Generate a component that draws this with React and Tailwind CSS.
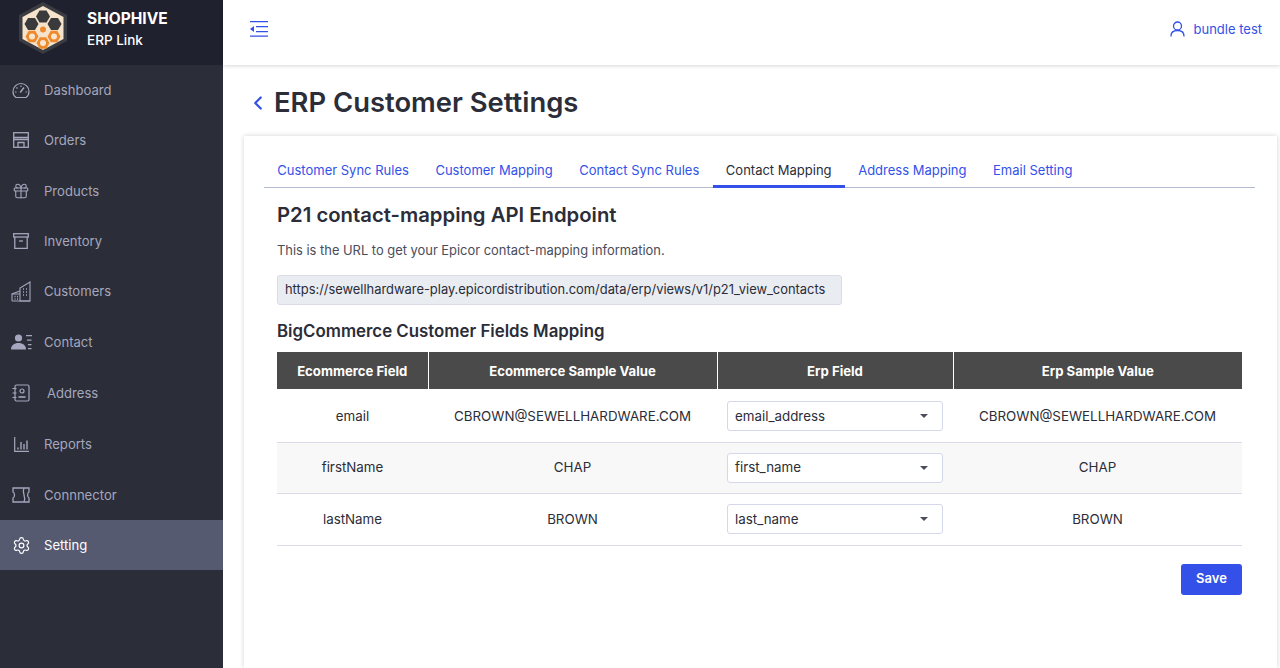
import { ChevronLeft, Gift, Settings } from "lucide-react";

function Logo() {
  const hex = (cx, cy, r) => {
    const pts = [];
    for (let i = 0; i < 6; i++) {
      const a = (Math.PI / 3) * i;
      pts.push(`${cx + r * Math.cos(a)},${cy + r * Math.sin(a)}`);
    }
    return pts.join(" ");
  };
  return (
    <svg width="50" height="52" viewBox="0 0 50 52" className="shrink-0">
      <polygon points="25,0 49,13 49,39 25,52 1,39 1,13" fill="#3b3c42" />
      <polygon points="25,4 45.500,15 45.500,37 25,48 4.500,37 4.500,15" fill="#f6e3cb" />
      <polygon points={hex(25, 14.500, 7)} fill="#3a3a3c" />
      <polygon points={hex(13.500, 22, 7)} fill="#3a3a3c" />
      <polygon points={hex(36.500, 22, 7)} fill="#3a3a3c" />
      <circle cx="25" cy="27.500" r="3" fill="#ee8a2b" />
      <polygon points={hex(14, 34.500, 6.5)} fill="#ee8a2b" />
      <polygon points={hex(25, 41, 6.5)} fill="#ee8a2b" />
      <polygon points={hex(36, 34.500, 6.5)} fill="#ee8a2b" />
      <circle cx="14" cy="34.500" r="3" fill="#f8e6cf" />
      <circle cx="25" cy="41" r="3" fill="#f8e6cf" />
      <circle cx="36" cy="34.500" r="3" fill="#f8e6cf" />
    </svg>
  );
}

function GaugeIcon() {
  return (
    <svg width="18" height="17" viewBox="0 0 18 17" fill="none" stroke="currentColor" strokeWidth="1.200">
      <path d="M4 15.500C2 14.200 1 11.800 1 9.500a8 8 0 0 1 16 0c0 2.300-1 4.700-3 6H4Z" />
      <path d="M8.200 10.500 12 5.500" strokeWidth="1.500" />
      <path d="M9 3.500v1.500M4.500 5.500l1 1M3 10h1.500M13.500 10H15" />
    </svg>
  );
}

function StoreIcon() {
  return (
    <svg width="16" height="16" viewBox="0 0 16 16" fill="none" stroke="currentColor" strokeWidth="1.300">
      <rect x="0.700" y="0.700" width="14.600" height="14.600" />
      <path d="M.7 5.500h14.600M.7 7.500h14.600" />
      <path d="M5 15v-4.500h6V15" />
    </svg>
  );
}

function ArchiveIcon() {
  return (
    <svg width="16" height="16" viewBox="0 0 16 16" fill="none" stroke="currentColor" strokeWidth="1.300">
      <rect x="0.700" y="0.700" width="14.600" height="3.300" />
      <path d="M1.800 4v11.300h12.400V4" />
      <path d="M6 8h4" />
    </svg>
  );
}

function ReportsIcon() {
  return (
    <svg width="15" height="15" viewBox="0 0 15 15" fill="none" stroke="currentColor" strokeWidth="1.200">
      <path d="M.7 0v14.300H15" />
      <path d="M4 12.500v-2M7 12.500V5M10 12.500V7M13 12.500V3.500" strokeWidth="1.400" />
    </svg>
  );
}

function BuildingIcon() {
  return (
    <svg width="20" height="21" viewBox="0 0 20 21" fill="none" stroke="currentColor" strokeWidth="1.100">
      <path d="M9 20V7l10-6v19H9Z" />
      <path d="M1 20v-7l8-3" />
      <path d="M1 20h18M1 13h8" />
      <path d="M12 8h1M15 8h1M12 11h1M15 11h1M12 14h1M15 14h1M3.500 15.500h1M6 15.500h1M3.500 18h1M6 18h1" strokeWidth="1.400" />
    </svg>
  );
}

function ContactIcon() {
  return (
    <svg width="21" height="16" viewBox="0 0 21 16" fill="currentColor">
      <circle cx="7.500" cy="4" r="3.600" />
      <path d="M0 15.500c0-4 3-6.500 7.500-6.500s7.500 2.500 7.500 6.500H0Z" />
      <path d="M15 1h6v1.200h-6zM16 5.500h4.500v1.200H16zM17 10h3.500v1.200H17zM17 14h3.500v1.200H17z" />
    </svg>
  );
}

function AddressIcon() {
  return (
    <svg width="18" height="18" viewBox="0 0 18 18" fill="none" stroke="currentColor" strokeWidth="1.200">
      <rect x="3" y="1" width="14" height="16" rx="1.500" />
      <circle cx="10" cy="7" r="2" />
      <path d="M6.500 13h7" strokeWidth="1.600" />
      <path d="M.5 4.500h4M.5 9h4M.5 13.500h4" />
    </svg>
  );
}

function ConnectorIcon() {
  return (
    <svg width="18" height="16" viewBox="0 0 18 16" fill="none" stroke="currentColor" strokeWidth="1.300">
      <path d="M1 1h16v4c-1.800.6-1.800 5.400 0 6v4H1v-4c2-.6 2-5.400 0-6V1Z" />
      <path d="M12 1c-1 2-1 4 0 7s1 5 0 7" />
    </svg>
  );
}

function MenuIcon() {
  return (
    <svg width="18" height="16" viewBox="0 0 18 16" fill="#3351e8">
      <path d="M0 0h18v1.200H0zM6 5h12v1.200H6zM6 10h12v1.200H6zM0 14.500h18v1.200H0z" />
      <path d="M4 5v6L0 8l4-3Z" />
    </svg>
  );
}

function UserIcon() {
  return (
    <svg width="15" height="16" viewBox="0 0 15 16" fill="none" stroke="#3351e8" strokeWidth="1.300">
      <circle cx="7.500" cy="5" r="4" />
      <path d="M1 15.500v-.5c0-3 2-5.500 6.500-5.500s6.500 2.500 6.500 5.500v.5" />
    </svg>
  );
}

const nav = [
  { label: "Dashboard", icon: <GaugeIcon />, h: "h-[50px]" },
  { label: "Orders", icon: <StoreIcon />, h: "h-[50px]" },
  { label: "Products", icon: <Gift size={18} strokeWidth={1.5} />, h: "h-[51px]" },
  { label: "Inventory", icon: <ArchiveIcon />, h: "h-[50px]" },
  { label: "Customers", icon: <BuildingIcon />, h: "h-[50px]" },
  { label: "Contact", icon: <ContactIcon />, h: "h-[51px]" },
  { label: "Address", icon: <AddressIcon />, h: "h-[51px]", shift: true },
  { label: "Reports", icon: <ReportsIcon />, h: "h-[52px]" },
  { label: "Connnector", icon: <ConnectorIcon />, h: "h-[50px]" },
  { label: "Setting", icon: <Settings size={19} strokeWidth={1.5} />, h: "h-[50px]", active: true },
];

const tabs = ["Customer Sync Rules", "Customer Mapping", "Contact Sync Rules", "Contact Mapping", "Address Mapping", "Email Setting"];

const rows = [
  { field: "email", sample: "CBROWN@SEWELLHARDWARE.COM", erp: "email_address", erpSample: "CBROWN@SEWELLHARDWARE.COM", h: "h-[53px]", pad: "pt-[2px]" },
  { field: "firstName", sample: "CHAP", erp: "first_name", erpSample: "CHAP", h: "h-[51px]", alt: true, pad: "" },
  { field: "lastName", sample: "BROWN", erp: "last_name", erpSample: "BROWN", h: "h-[52px]", pad: "" },
];

export default function App() {
  return (
    <div className="flex h-[668px] w-[1280px] overflow-hidden bg-white font-['Inter',sans-serif] text-[#2b2d38] antialiased">
      <aside className="w-[223px] shrink-0 bg-[#2b2d38]">
        <div className="flex h-[65px] items-start gap-[19px] bg-[#20212e] pl-[18px] pt-[2px]">
          <Logo />
          <div className="mt-[7px] text-white">
            <div className="text-[15.500px] font-bold leading-5">SHOPHIVE</div>
            <div className="mt-[1px] text-[13.500px] font-medium leading-5">ERP Link</div>
          </div>
        </div>
        <nav>
          {nav.map((item) => (
            <div
              key={item.label}
              className={`flex items-center text-[13.100px] ${item.h} ${item.active ? "bg-[#565a70] text-white" : "text-[#a4a7bd]"}`}
            >
              <span className="mr-[2px] flex w-[42px] shrink-0 justify-center">{item.icon}</span>
              <span className={item.shift ? "ml-[3px] pt-[2px]" : "pt-[2px]"}>{item.label}</span>
            </div>
          ))}
        </nav>
      </aside>

      <main className="flex min-w-0 flex-1 flex-col bg-white">
        <header className="flex h-[65px] shrink-0 items-center justify-between pb-[7px] pl-[27px] pr-[18px] shadow-[0_1px_4px_rgba(0,0,0,0.16)]">
          <MenuIcon />
          <div className="flex items-center gap-[9px] text-[13px] text-[#3351e8]">
            <UserIcon />
            <span className="pt-[1px]">bundle test</span>
          </div>
        </header>

        <div className="flex h-[71px] shrink-0 items-center pl-[24px] pt-[5px]">
          <ChevronLeft size={22} strokeWidth={2.4} className="text-[#3351e8]" />
          <h1 className="ml-[5px] text-[27.400px] font-semibold leading-none">ERP Customer Settings</h1>
        </div>

        <section className="ml-[21px] mr-[3px] flex-1 bg-white pl-[20px] pr-[22px] pt-[18px] shadow-[0_0_5px_rgba(0,0,0,0.18)]">
          <div className="flex h-[34px] border-b border-[#b4bad0] text-[13px]">
            {tabs.map((tab) => (
              <div
                key={tab}
                className={`flex h-[34px] items-center px-[13.300px] ${tab === "Contact Mapping" ? "border-b-[3px] border-[#3351e8] pt-[2px] text-[#2b2d38]" : "pb-[1px] text-[#3351e8]"}`}
              >
                {tab}
              </div>
            ))}
          </div>

          <div className="pl-[13px] pr-[13px]">
            <h2 className="mt-[15px] text-[20.300px] font-semibold leading-[24px]">P21 contact-mapping API Endpoint</h2>
            <p className="mt-[14px] text-[12.900px] leading-5 text-[#4a4d5c]">This is the URL to get your Epicor contact-mapping information.</p>
            <div className="mt-[14px] flex h-[30px] w-[565px] items-center rounded-[3px] border border-[#d9dce6] bg-[#e9ecf1] px-[7px] text-[12.900px] text-[#2b2d38]">
              https://sewellhardware-play.epicordistribution.com/data/erp/views/v1/p21_view_contacts
            </div>
            <h3 className="mt-[16px] text-[16.850px] font-semibold leading-5">BigCommerce Customer Fields Mapping</h3>

            <table className="mt-[11px] w-[965px] table-fixed border-collapse text-[13.350px]">
              <colgroup>
                <col className="w-[151px]" />
                <col className="w-[289px]" />
                <col className="w-[236px]" />
                <col className="w-[289px]" />
              </colgroup>
              <thead>
                <tr className="h-[37px] bg-[#4a4a4a] text-[13.150px] text-white">
                  <th className="border-r border-white pt-[2px] font-bold">Ecommerce Field</th>
                  <th className="border-r border-white pt-[2px] font-bold">Ecommerce Sample Value</th>
                  <th className="border-r border-white pt-[2px] font-bold">Erp Field</th>
                  <th className="pt-[2px] font-bold">Erp Sample Value</th>
                </tr>
              </thead>
              <tbody>
                {rows.map((r) => (
                  <tr key={r.field} className={`${r.h} border-b border-[#d9dce8] text-center ${r.alt ? "bg-[#f8f8f9]" : ""}`}>
                    <td className={r.pad}>{r.field}</td>
                    <td className={r.pad}>{r.sample}</td>
                    <td className={`pl-[10px] ${r.pad}`}>
                      <div className="flex h-[30px] w-[216px] items-center justify-between rounded-[3px] border border-[#d5d7ea] bg-white pl-[7px] pr-[14px] text-left">
                        <span>{r.erp}</span>
                        <span className="h-0 w-0 border-x-[4px] border-t-[4px] border-x-transparent border-t-[#4a4d5c]" />
                      </div>
                    </td>
                    <td className={r.pad}>{r.erpSample}</td>
                  </tr>
                ))}
              </tbody>
            </table>

            <div className="mt-[18px] flex justify-end">
              <button className="h-[31px] w-[61px] rounded-[3px] bg-[#3351e8] text-[13px] font-semibold text-white">Save</button>
            </div>
          </div>
        </section>
      </main>
    </div>
  );
}
